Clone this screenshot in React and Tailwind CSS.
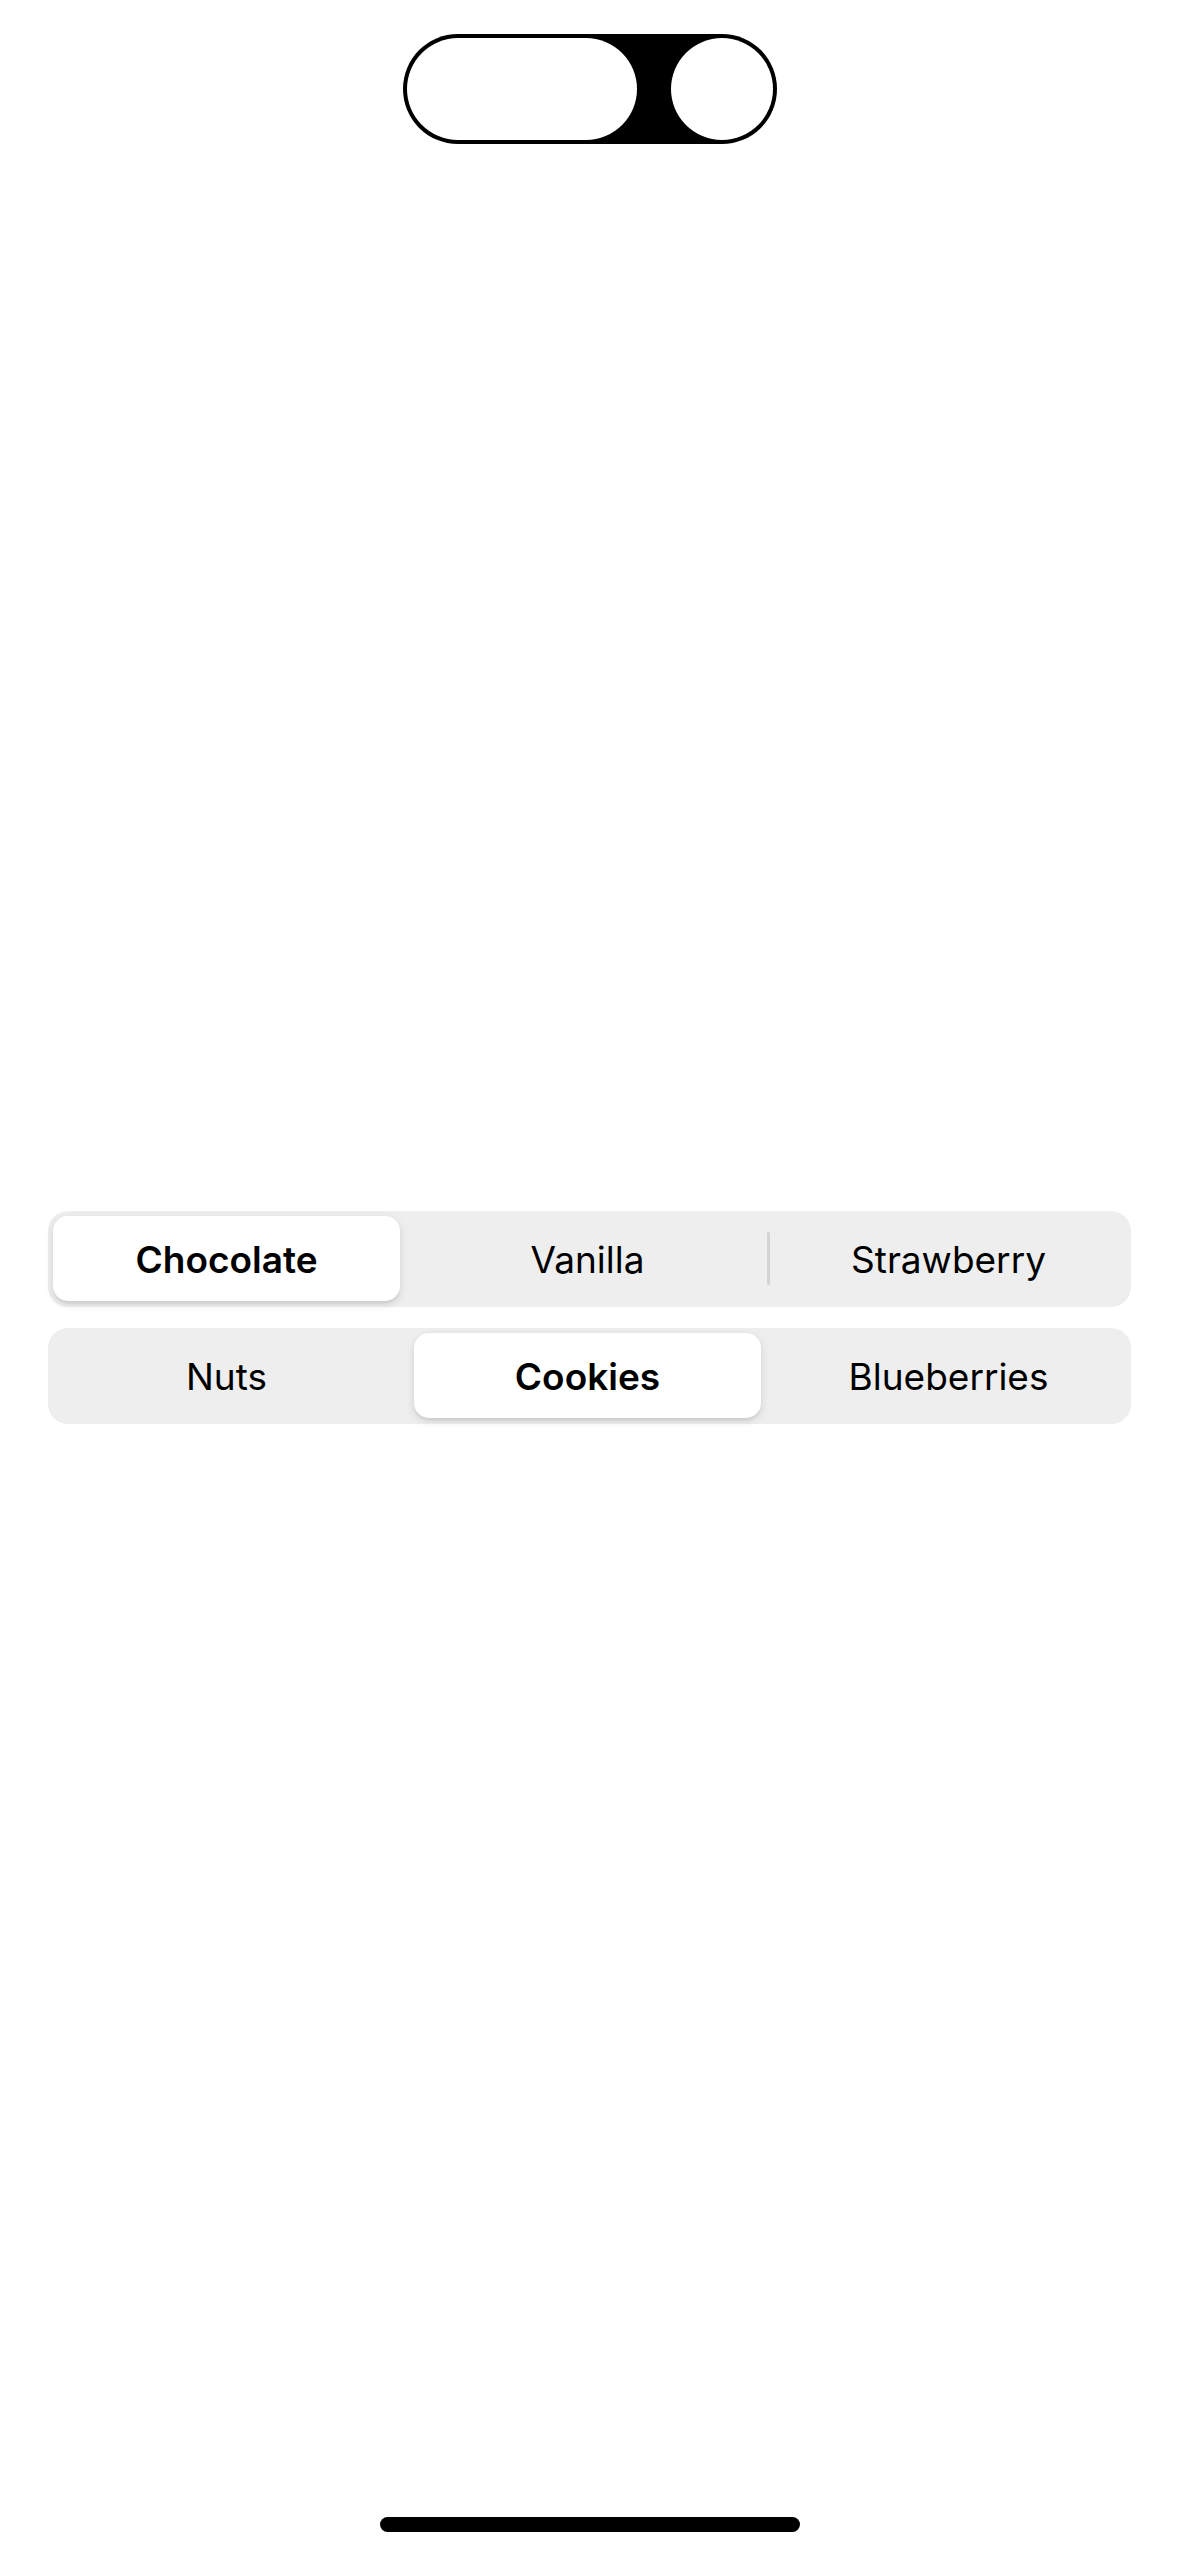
import React from "react";

const font = { fontFamily: "Inter, 'Noto Sans', 'Liberation Sans', sans-serif" };

function Segmented({ items, selected }) {
  return (
    <div className="w-[1083px] h-[96px] rounded-[20px] bg-[#eeeeef] pl-[5px] pr-[9px] py-[5px] flex gap-[14px]">
      {items.map((label, i) => {
        const isSel = i === selected;
        const showDivider =
          i < items.length - 1 && i !== selected && i + 1 !== selected;
        return (
          <div key={label} className="relative w-[347px] flex items-center justify-center">
            {isSel && (
              <div className="absolute inset-x-0 top-0 bottom-[1px] rounded-[15px] bg-white shadow-[0_3px_8px_rgba(0,0,0,0.12),0_3px_1px_rgba(0,0,0,0.04)]" />
            )}
            <span
              className={
                "relative text-[37px] leading-none text-black " +
                (isSel ? "font-[560]" : "font-normal")
              }
            >
              {label}
            </span>
            {showDivider && (
              <div className="absolute right-[-9px] top-[16px] w-[3px] h-[53px] rounded-full bg-[#d4d4d6]" />
            )}
          </div>
        );
      })}
    </div>
  );
}

export default function App() {
  return (
    <div className="w-[1179px] h-[2556px] bg-white flex flex-col items-center" style={font}>
      <div className="mt-[34px] w-[374px] h-[110px] rounded-full bg-black p-[4px] flex items-center justify-between">
        <div className="w-[230px] h-[102px] rounded-full bg-white" />
        <div className="w-[102px] h-[102px] rounded-full bg-white" />
      </div>

      <div className="mt-[1067px] flex flex-col gap-[21px]">
        <Segmented items={["Chocolate", "Vanilla", "Strawberry"]} selected={0} />
        <Segmented items={["Nuts", "Cookies", "Blueberries"]} selected={1} />
      </div>

      <div className="mt-auto mb-[24px] w-[420px] h-[15px] rounded-full bg-black" />
    </div>
  );
}
